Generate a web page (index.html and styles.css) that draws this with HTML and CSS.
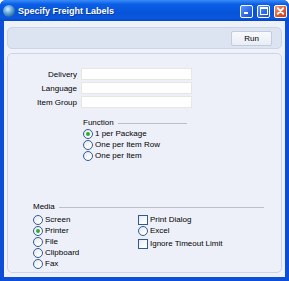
FILE: index.html
```html
<!DOCTYPE html>
<html lang="en">
<head>
    <meta charset="UTF-8">
    <title>Specify Freight Labels</title>
    <link rel="stylesheet" href="styles.css">
</head>
<body>
    <div class="window">
        <div class="titlebar">
            <span class="app-icon"></span>
            <span class="title">Specify Freight Labels</span>
            <div class="caption-buttons">
                <span class="cap-btn cap-min"></span>
                <span class="cap-btn cap-max"></span>
                <span class="cap-btn cap-close">
                    <svg width="12" height="12" viewBox="0 0 12 12"><path d="M3 3 L9 9 M9 3 L3 9" stroke="#fff" stroke-width="2" stroke-linecap="round"/></svg>
                </span>
            </div>
        </div>

        <div class="client">
            <div class="toolbar">
                <button class="btn">Run</button>
            </div>

            <div class="panel">
                <div class="fields">
                    <label>Delivery</label><span class="input"></span>
                    <label>Language</label><span class="input"></span>
                    <label>Item Group</label><span class="input"></span>
                </div>

                <div class="group function-group">
                    <div class="group-head"><span>Function</span><span class="rule"></span></div>
                    <div class="option"><span class="radio checked"></span>1 per Package</div>
                    <div class="option"><span class="radio"></span>One per Item Row</div>
                    <div class="option"><span class="radio"></span>One per Item</div>
                </div>

                <div class="group media-group">
                    <div class="group-head"><span>Media</span><span class="rule"></span></div>
                    <div class="media-cols">
                        <div class="col">
                            <div class="option"><span class="radio"></span>Screen</div>
                            <div class="option"><span class="radio checked"></span>Printer</div>
                            <div class="option"><span class="radio"></span>File</div>
                            <div class="option"><span class="radio"></span>Clipboard</div>
                            <div class="option"><span class="radio"></span>Fax</div>
                        </div>
                        <div class="col">
                            <div class="option"><span class="check"></span>Print Dialog</div>
                            <div class="option"><span class="radio"></span>Excel</div>
                            <div class="option spaced"><span class="check"></span>Ignore Timeout Limit</div>
                        </div>
                    </div>
                </div>
            </div>
        </div>
    </div>
</body>
</html>
```

FILE: styles.css
```css
* {
    margin: 0;
    padding: 0;
    box-sizing: border-box;
}

body {
    font-family: 'Liberation Sans', Arial, sans-serif;
    font-size: 8px;
    color: #000;
    background: #fff;
}

.window {
    width: 289px;
    height: 281px;
    display: flex;
    flex-direction: column;
    background: #0c4ed8;
    padding: 0 4px 4px;
    border-radius: 6px 6px 0 0;
}

/* Title bar */
.titlebar {
    height: 21px;
    display: flex;
    align-items: center;
    margin: 0 -4px;
    padding: 0 2px 0 3px;
    background: linear-gradient(to bottom, #3a8cf7 0%, #0a5fe6 20%, #0653d8 60%, #0a58e0 85%, #0646c4 100%);
    border-radius: 6px 6px 0 0;
}

.app-icon {
    width: 12px;
    height: 12px;
    border-radius: 50%;
    background: radial-gradient(circle at 40% 35%, #d8eefc 0%, #6fb0e0 35%, #2c6ea8 70%, #1c4f80 100%);
    margin-right: 3px;
}

.title {
    color: #fff;
    font-weight: bold;
    font-size: 9px;
    text-shadow: 1px 1px 0 #0a3a9a;
    flex: 1;
}

.caption-buttons {
    display: flex;
    gap: 4px;
    margin-top: 1px;
}

.cap-btn {
    width: 13px;
    height: 13px;
    border: 1px solid #fff;
    border-radius: 2px;
    background: linear-gradient(135deg, #5f96f7 0%, #2b68e8 60%, #1d4fd0 100%);
    position: relative;
    display: flex;
    align-items: center;
    justify-content: center;
}

.cap-min::after {
    content: '';
    position: absolute;
    left: 3px;
    bottom: 3px;
    width: 4px;
    height: 2px;
    background: #fff;
}

.cap-max::after {
    content: '';
    width: 6px;
    height: 5px;
    border: 1px solid #fff;
    border-top-width: 2px;
}

.cap-close {
    background: linear-gradient(135deg, #f29a7a 0%, #e3562d 55%, #c73a14 100%);
}

/* Client area */
.client {
    flex: 1;
    background: #eff1f9;
    padding: 6px 3px 4px;
    display: flex;
    flex-direction: column;
    gap: 4px;
}

.toolbar {
    height: 22px;
    background: #dce4f2;
    border: 1px solid #c9d4e8;
    border-radius: 5px;
    display: flex;
    align-items: center;
    justify-content: flex-end;
    padding-right: 9px;
}

.btn {
    width: 41px;
    height: 15px;
    font-family: inherit;
    font-size: 8px;
    color: #000;
    background: linear-gradient(to bottom, #f8f9fc 0%, #e9edf5 100%);
    border: 1px solid #c3cbdc;
    border-radius: 2px;
}

.panel {
    flex: 1;
    background: #eef0f9;
    border: 1px solid #ccd5e8;
    border-radius: 5px;
    padding-top: 14px;
}

.fields {
    display: grid;
    grid-template-columns: 69px 111px;
    column-gap: 4px;
    row-gap: 2px;
    align-items: center;
}

.fields label {
    text-align: right;
}

.input {
    height: 12px;
    background: #fff;
    border: 1px solid #e8e6e0;
}

.group-head {
    display: flex;
    align-items: center;
    gap: 4px;
    height: 11px;
}

.rule {
    flex: 1;
    height: 1px;
    background: #b9c0cc;
    margin-top: 2px;
}

.option {
    height: 11px;
    display: flex;
    align-items: center;
    gap: 2px;
    white-space: nowrap;
}

.radio,
.check {
    width: 10px;
    height: 10px;
    border: 1px solid #2f5a98;
    background: linear-gradient(135deg, #e4e8ee 0%, #ffffff 80%);
    display: flex;
    align-items: center;
    justify-content: center;
    flex-shrink: 0;
}

.radio {
    border-radius: 50%;
}

.radio.checked::after {
    content: '';
    width: 4px;
    height: 4px;
    border-radius: 50%;
    background: #2fae2f;
}

.function-group {
    margin: 9px 0 0 75px;
    width: 104px;
}

.media-group {
    margin: 40px 0 0 25px;
    width: 231px;
}

.media-cols {
    display: grid;
    grid-template-columns: 105px 1fr;
    margin-top: 2px;
}

.option.spaced {
    margin-top: 2px;
}
```
